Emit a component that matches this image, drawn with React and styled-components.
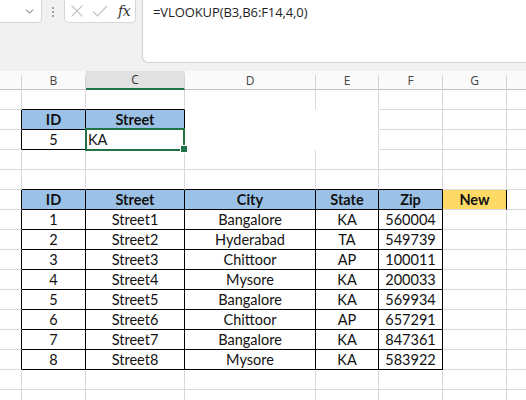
import React from "react";
import styled, { createGlobalStyle, css } from "styled-components";
import { ChevronDown } from "lucide-react";

const Global = createGlobalStyle`
  html, body { margin: 0; padding: 0; background: #fff; overflow: hidden; }
  * { box-sizing: border-box; }
`;

const COLS = [22, 64, 99, 131, 63, 64, 64, 55];
const GRID = COLS.map((w) => `${w}px`).join(" ");
const LETTERS = ["", "B", "C", "D", "E", "F", "G", ""];

const Page = styled.div`
  width: 526px;
  height: 400px;
  display: flex;
  flex-direction: column;
  overflow: hidden;
  font-family: "Open Sans", "Noto Sans", sans-serif;
`;

const Toolbar = styled.div`
  height: 71px;
  flex: none;
  background: #f1f1f1;
  display: flex;
  align-items: flex-start;
`;

const NameBox = styled.div`
  width: 42px;
  height: 23px;
  background: #fff;
  border-right: 1px solid #d6d6d6;
  border-bottom: 1px solid #d6d6d6;
  border-bottom-right-radius: 5px;
  display: flex;
  align-items: center;
  justify-content: flex-end;
  padding-right: 5px;
  color: #444;
`;

const Dots = styled.div`
  width: 22px;
  height: 23px;
  display: flex;
  flex-direction: column;
  align-items: center;
  justify-content: center;
  gap: 2px;
  span {
    width: 2px;
    height: 2px;
    border-radius: 1px;
    background: #8a8a8a;
  }
`;

const FxBox = styled.div`
  width: 72px;
  height: 23px;
  background: #fff;
  border: 1px solid #d6d6d6;
  border-top: none;
  border-radius: 0 0 5px 5px;
  display: flex;
  align-items: center;
  padding-left: 5px;
  gap: 8px;
`;

const FxText = styled.span`
  font-family: "DejaVu Serif", "Liberation Serif", serif;
  font-style: italic;
  font-size: 14px;
  color: #333;
  margin-left: 2px;
  letter-spacing: -0.5px;
`;

const FormulaBox = styled.div`
  flex: 1;
  margin-left: 6px;
  height: 63px;
  background: #fff;
  border-left: 1px solid #d2d2d2;
  border-bottom: 1px solid #d2d2d2;
  border-bottom-left-radius: 6px;
  padding: 3px 0 0 10px;
  font-size: 13px;
  color: #1e1e1e;
  letter-spacing: -0.1px;
`;

const HeaderRow = styled.div`
  display: grid;
  grid-template-columns: ${GRID};
  height: 19px;
  flex: none;
  background: #fafafa;
  border-bottom: 1px solid #c4c4c4;
`;

const ColHead = styled.div`
  position: relative;
  display: flex;
  align-items: center;
  justify-content: center;
  font-size: 12px;
  color: #444;
  border-right: 1px solid transparent;
  ${(p) =>
    p.$active &&
    css`
      background: #e1e1e1;
      border-bottom: 2px solid #217346;
      color: #333;
    `}
  &::after {
    content: "";
    position: absolute;
    right: -1px;
    top: 4px;
    bottom: 0;
    width: 1px;
    background: #d4d4d4;
  }
`;

const Sheet = styled.div`
  display: grid;
  grid-template-columns: ${GRID};
  grid-auto-rows: 20px;
  flex: none;
`;

const Cell = styled.div`
  position: relative;
  display: flex;
  align-items: center;
  justify-content: ${(p) => (p.$left ? "flex-start" : "center")};
  padding-left: ${(p) => (p.$left ? "2px" : "0")};
  font-family: "Lato", "Liberation Sans", sans-serif;
  font-size: 14.5px;
  font-weight: ${(p) => (p.$bold ? 700 : 400)};
  color: #111;
  background: ${(p) => p.$fill || "#fff"};
  border-right: 1px solid ${(p) => p.$br};
  border-bottom: 1px solid ${(p) => p.$bb};
  ${(p) =>
    p.$selected &&
    css`
      z-index: 2;
      &::before {
        content: "";
        position: absolute;
        left: -1px;
        top: -2px;
        right: -1px;
        bottom: -2px;
        border: 2px solid #217346;
        pointer-events: none;
      }
      &::after {
        content: "";
        position: absolute;
        right: -4px;
        bottom: -4px;
        width: 6px;
        height: 6px;
        background: #217346;
        border: 1px solid #fff;
      }
    `}
`;

const BLUE = "#9bc2e6";
const GOLD = "#ffd966";
const GRIDC = "#d9d9d9";
const BLACK = "#000";

const data = [
  [1, "Street1", "Bangalore", "KA", "560004"],
  [2, "Street2", "Hyderabad", "TA", "549739"],
  [3, "Street3", "Chittoor", "AP", "100011"],
  [4, "Street4", "Mysore", "KA", "200033"],
  [5, "Street5", "Bangalore", "KA", "569934"],
  [6, "Street6", "Chittoor", "AP", "657291"],
  [7, "Street7", "Bangalore", "KA", "847361"],
  [8, "Street8", "Mysore", "KA", "583922"],
];

const ROWS = 16;

function buildCells() {
  const cells = {};
  const put = (r, c, v) => (cells[`${r}-${c}`] = v);
  put(1, 1, { text: "ID", bold: true, fill: BLUE });
  put(1, 2, { text: "Street", bold: true, fill: BLUE });
  put(2, 1, { text: "5" });
  put(2, 2, { text: "KA", left: true, selected: true });
  ["ID", "Street", "City", "State", "Zip"].forEach((t, i) =>
    put(5, i + 1, { text: t, bold: true, fill: BLUE })
  );
  put(5, 6, { text: "New", bold: true, fill: GOLD, rightBlack: true });
  data.forEach((row, r) =>
    row.forEach((v, c) => put(6 + r, c + 1, { text: String(v) }))
  );
  return cells;
}

const inTable = (r, c) =>
  (r >= 1 && r <= 2 && c >= 1 && c <= 2) ||
  (r >= 5 && r <= 13 && c >= 1 && c <= 5);

// cells whose gridlines are hidden by a white fill
const noBottom = new Set(["0-3", "0-4", "1-3", "1-4", "2-3", "2-4"]);
const noRight = new Set(["1-3", "2-3"]);

export default function App() {
  const cells = buildCells();
  const grid = [];
  for (let r = 0; r < ROWS; r++) {
    for (let c = 0; c < COLS.length; c++) {
      const key = `${r}-${c}`;
      const info = cells[key] || {};
      const t = inTable(r, c);
      let br = t || inTable(r, c + 1) || info.rightBlack ? BLACK : GRIDC;
      let bb = t || inTable(r + 1, c) ? BLACK : GRIDC;
      if (br === GRIDC && noRight.has(key)) br = "transparent";
      if (bb === GRIDC && noBottom.has(key)) bb = "transparent";
      grid.push(
        <Cell
          key={key}
          $br={br}
          $bb={bb}
          $fill={info.fill}
          $bold={info.bold}
          $left={info.left}
          $selected={info.selected}
        >
          {info.text}
        </Cell>
      );
    }
  }

  return (
    <Page>
      <Global />
      <Toolbar>
        <NameBox>
          <ChevronDown size={13} strokeWidth={1.6} />
        </NameBox>
        <Dots>
          <span />
          <span />
          <span />
        </Dots>
        <FxBox>
          <svg width="14" height="14" viewBox="0 0 14 14">
            <path d="M1.5 1.5 L12.5 12.5 M12.5 1.5 L1.5 12.5" stroke="#c4c4c4" strokeWidth="1.1" fill="none" />
          </svg>
          <svg width="16" height="14" viewBox="0 0 16 14">
            <path d="M1 7.5 L5.5 12 L15 2" stroke="#c4c4c4" strokeWidth="1.1" fill="none" />
          </svg>
          <FxText>fx</FxText>
        </FxBox>
        <FormulaBox>=VLOOKUP(B3,B6:F14,4,0)</FormulaBox>
      </Toolbar>
      <HeaderRow>
        {LETTERS.map((l, i) => (
          <ColHead key={i} $active={l === "C"}>
            {l}
          </ColHead>
        ))}
      </HeaderRow>
      <Sheet>{grid}</Sheet>
    </Page>
  );
}
